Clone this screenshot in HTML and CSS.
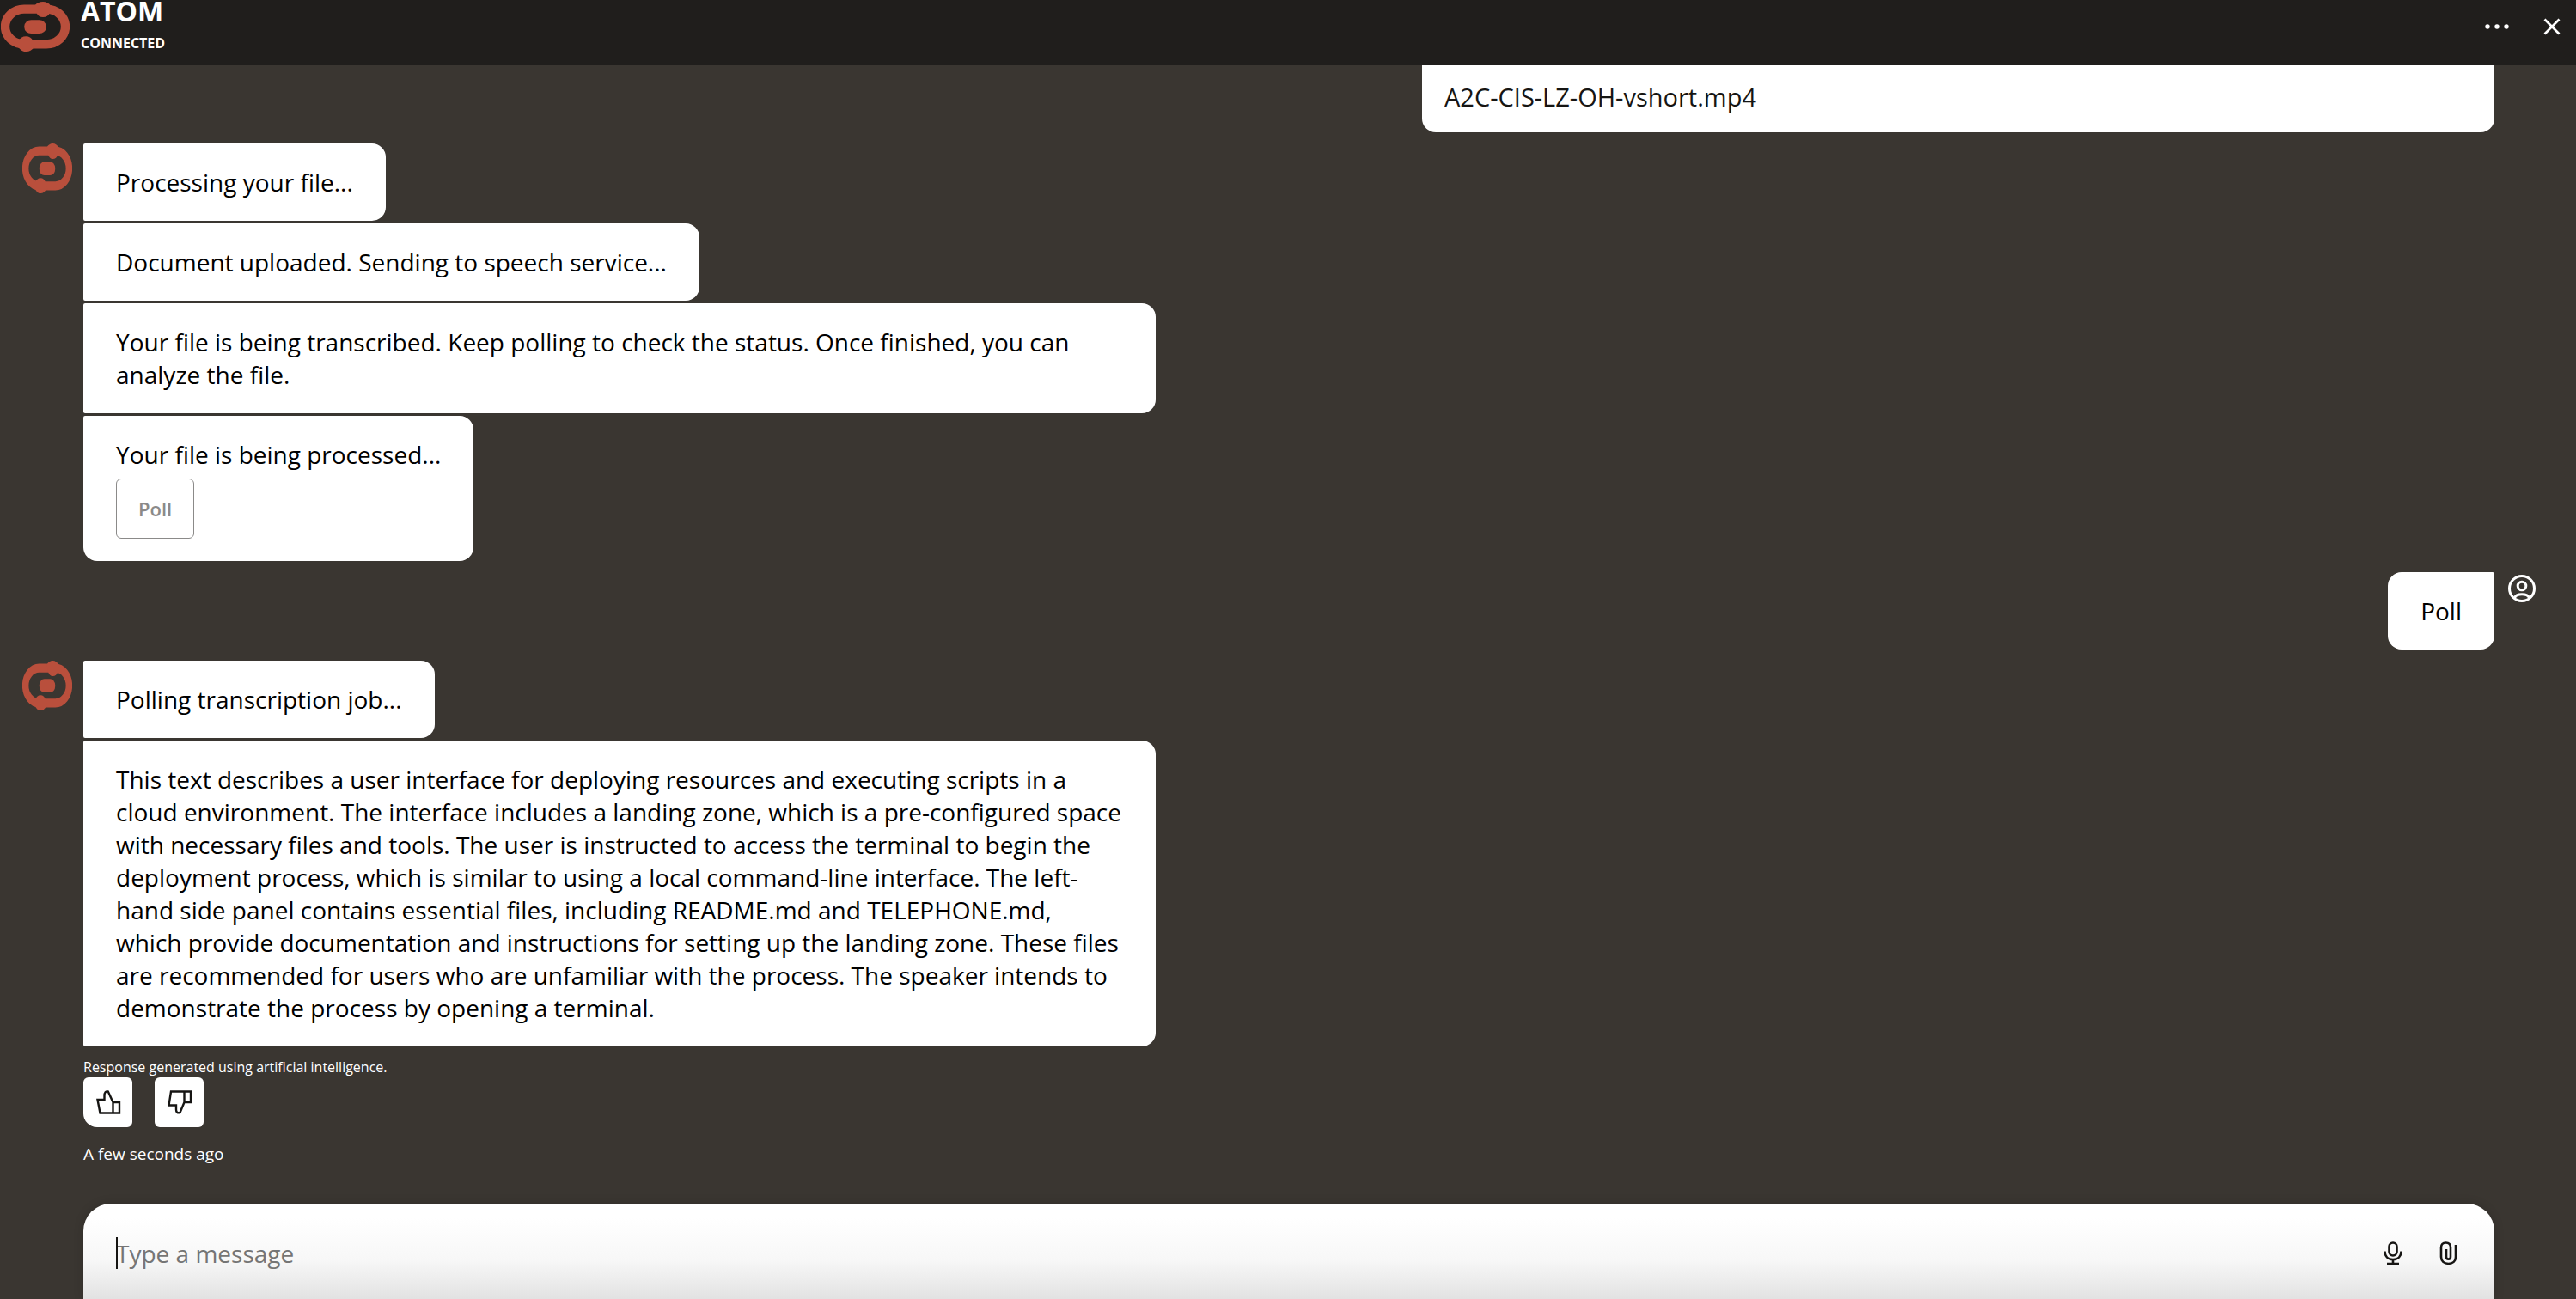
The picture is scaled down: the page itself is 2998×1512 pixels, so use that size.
FILE: index.html
```html
<!DOCTYPE html>
<html lang="en">
<head>
<meta charset="utf-8">
<meta name="viewport" content="width=device-width, initial-scale=1">
<title>ATOM</title>
<link rel="stylesheet" href="styles.css">
</head>
<body>
<svg class="defs" width="0" height="0" aria-hidden="true">
  <symbol id="logo" viewBox="0 0 240 174" preserveAspectRatio="none">
    <rect x="15" y="26" width="210" height="122" rx="66" ry="61" fill="none" stroke="currentColor" stroke-width="31"/>
    <path d="M118 14 Q128 0 147 0 Q164 0 174 14 L172 38 Q164 54 147 54 Q131 54 124 38Z M122 160 L115 160 Q106 174 88 174 Q74 174 66 164 L50 150 L60 138 Q70 121 88 121 Q104 121 112 136Z" fill="currentColor"/>
    <rect x="82" y="64" width="76" height="47" rx="24" ry="21" fill="currentColor"/>
  </symbol>
</svg>

<header class="header">
  <svg class="header-logo" aria-hidden="true"><use href="#logo"/></svg>
  <div class="header-text">
    <h1 class="title">ATOM</h1>
    <p class="status">CONNECTED</p>
  </div>
  <div class="header-actions">
    <button class="icon-button" type="button" aria-label="More options">
      <svg width="32" height="32" viewBox="0 0 32 32" fill="currentColor"><circle cx="5" cy="16" r="2.700"/><circle cx="16" cy="16" r="2.700"/><circle cx="27" cy="16" r="2.700"/></svg>
    </button>
    <button class="icon-button" type="button" aria-label="Close">
      <svg width="32" height="32" viewBox="0 0 32 32" fill="none" stroke="currentColor" stroke-width="2.700"><path d="M7.500 7.500 24.500 24.500 M24.500 7.500 7.500 24.500"/></svg>
    </button>
  </div>
</header>

<main class="conversation">
  <section class="group user">
    <div class="bubbles">
      <div class="file">A2C-CIS-LZ-OH-vshort.mp4</div>
    </div>
    <div class="avatar"></div>
  </section>

  <section class="group bot">
    <svg class="avatar" aria-hidden="true"><use href="#logo"/></svg>
    <div class="bubbles">
      <p class="bubble">Processing your file...</p>
      <p class="bubble">Document uploaded. Sending to speech service...</p>
      <p class="bubble">Your file is being transcribed. Keep polling to check the status. Once finished, you can analyze the file.</p>
      <div class="bubble last">
        <p>Your file is being processed...</p>
        <button class="action" type="button" disabled>Poll</button>
      </div>
    </div>
  </section>

  <section class="group user">
    <div class="bubbles">
      <p class="bubble">Poll</p>
    </div>
    <div class="avatar">
      <svg width="32" height="32" viewBox="0 0 32 32" fill="none" stroke="currentColor" stroke-width="3"><circle cx="16" cy="16" r="14.500"/><circle cx="16" cy="13" r="4.800"/><path d="M7.500 27 C8.500 24 12 22.800 16 22.800 S23.500 24 24.500 27"/></svg>
    </div>
  </section>

  <section class="group bot">
    <svg class="avatar" aria-hidden="true"><use href="#logo"/></svg>
    <div class="bubbles">
      <p class="bubble">Polling transcription job...</p>
      <p class="bubble">This text describes a user interface for deploying resources and executing scripts in a cloud environment. The interface includes a landing zone, which is a pre-configured space with necessary files and tools. The user is instructed to access the terminal to begin the deployment process, which is similar to using a local command-line interface. The left-hand side panel contains essential files, including README.md and TELEPHONE.md, which provide documentation and instructions for setting up the landing zone. These files are recommended for users who are unfamiliar with the process. The speaker intends to demonstrate the process by opening a terminal.</p>
      <p class="note">Response generated using artificial intelligence.</p>
      <div class="feedback">
        <button class="rate up" type="button" aria-label="Like">
          <svg width="32" height="32" viewBox="0 0 32 32" fill="none" stroke="currentColor" stroke-width="2.400"><path d="M3.500 13 H11.500 V8.500 C11.500 4.500 13 3 15.800 3.500 L21.500 16 V28.500 H6.500Z M21.500 16 H29 V28.500 H21.500"/></svg>
        </button>
        <button class="rate" type="button" aria-label="Dislike">
          <svg width="32" height="32" viewBox="0 0 32 32" fill="none" stroke="currentColor" stroke-width="2.400"><path d="M6 3.500 H21.500 V16 L16.500 28 C13.500 29 12 27.500 12 24.500 V19.500 H3.500Z M21.500 3.500 H29 V16 H21.500"/></svg>
        </button>
      </div>
      <time class="timestamp">A few seconds ago</time>
    </div>
  </section>
</main>

<form class="composer">
  <div class="field">
    <input class="input" type="text" placeholder="Type a message" aria-label="Type a message">
  </div>
  <button class="icon-button" type="button" aria-label="Speak">
    <svg width="32" height="32" viewBox="0 0 32 32" fill="none" stroke="currentColor" stroke-width="2.600"><rect x="11.500" y="3.500" width="9" height="15" rx="4.500"/><path d="M6.500 13.500 C6.500 19 10 23 16 23 S25.500 19 25.500 13.500 M16 23 V28 M9 28 H23"/></svg>
  </button>
  <button class="icon-button" type="button" aria-label="Attach a file">
    <svg width="32" height="32" viewBox="0 0 32 32" fill="none" stroke="currentColor" stroke-width="2.600"><path d="M25 6 V20 C25 25 21.500 28 16.500 28 S8 25 8 20 V9 C8 5.500 10 3.500 13.500 3.500 S19 5.500 19 9 V20 C19 23.500 14 23.500 14 20 V11"/></svg>
  </button>
</form>
</body>
</html>
```

FILE: styles.css
```css
* {
  box-sizing: border-box;
}

body {
  display: flex;
  flex-direction: column;
  height: 100vh;
  margin: 0;
  overflow: hidden;
  background: #3a3631;
  color: #000;
  font-family: "Open Sans", "Noto Sans", sans-serif;
  font-size: 28px;
  line-height: 38px;
}

h1,
p {
  margin: 0;
}

button,
input {
  padding: 0;
  border: 0;
  background: none;
  color: inherit;
  font: inherit;
}

svg {
  display: block;
}

.defs {
  position: absolute;
}

.header {
  display: flex;
  flex: none;
  height: 76px;
  padding-right: 12px;
  background: #201e1c;
  color: #fff;
}

.header-logo {
  width: 80px;
  height: 58px;
  margin: 2px 13px 0 1px;
  color: #b94f3c;
}

.header-text {
  flex: 1;
}

.title {
  font-size: 32px;
  line-height: 26px;
}

.status {
  margin-top: 14px;
  font-size: 16px;
  font-weight: 700;
  line-height: 20px;
}

.header-actions {
  display: flex;
  gap: 32px;
  height: 62px;
}

.icon-button {
  display: flex;
  flex: none;
  align-items: center;
  justify-content: center;
  width: 32px;
}

.conversation {
  display: flex;
  flex: 1;
  flex-direction: column;
  gap: 13px;
  min-height: 0;
  overflow: hidden;
}

.group {
  display: flex;
}

.bubbles {
  display: flex;
  flex: 1;
  flex-direction: column;
  gap: 3px;
  align-items: flex-start;
}

.bot {
  padding-right: 95px;
}

.bot .avatar {
  flex: none;
  width: 58px;
  height: 58px;
  margin: 0 13px 0 26px;
  color: #b94f3c;
}

.user {
  padding-left: 97px;
}

.user .bubbles {
  align-items: flex-end;
}

.user .avatar {
  flex: none;
  width: 95px;
  padding: 3px 16px;
  color: #fff;
}

.bubble {
  max-width: 1248px;
  padding: 26px 38px;
  border-radius: 2px 16px 16px 2px;
  background: #fff;
}

.bubble.last {
  border-bottom-left-radius: 16px;
}

.user .bubble {
  border-radius: 16px 2px 16px 16px;
}

.file {
  width: 100%;
  max-width: 1248px;
  padding: 18px 26px 22px;
  border-radius: 0 0 16px 16px;
  background: #fff;
  color: #161513;
  font-size: 29px;
}

.action {
  height: 70px;
  margin-top: 9px;
  padding: 0 25px;
  border: 1px solid #8b8a89;
  border-radius: 6px;
  color: #8b8a89;
  font-size: 22px;
  font-weight: 600;
}

.note {
  margin-top: 12px;
  color: #fff;
  font-size: 16px;
  line-height: 18px;
}

.feedback {
  display: flex;
  gap: 26px;
}

.rate {
  display: flex;
  align-items: center;
  justify-content: center;
  width: 57px;
  height: 58px;
  border-radius: 6px;
  background: #fff;
  color: #161513;
}

.rate.up {
  border-bottom-left-radius: 16px;
}

.timestamp {
  margin-top: 15px;
  color: #fff;
  font-size: 19px;
  line-height: 26px;
}

.composer {
  display: flex;
  flex: none;
  gap: 32px;
  height: 111px;
  margin: 0 95px 0 97px;
  padding: 6px 38px 0;
  border-radius: 32px 32px 0 0;
  background: linear-gradient(#fff 15%, #f7f7f7 60%, #e2e2e2);
  box-shadow: 0 0 12px rgb(0 0 0 / 16%);
  color: #161513;
}

.composer .icon-button {
  height: 104px;
}

.field {
  position: relative;
  flex: 1;
}

.field::before {
  content: "";
  position: absolute;
  top: 33px;
  left: 0;
  width: 2px;
  height: 37px;
  background: #161513;
}

.input {
  width: 100%;
  height: 104px;
  outline: 0;
}

.input::placeholder {
  color: #757575;
  opacity: 1;
}
```
